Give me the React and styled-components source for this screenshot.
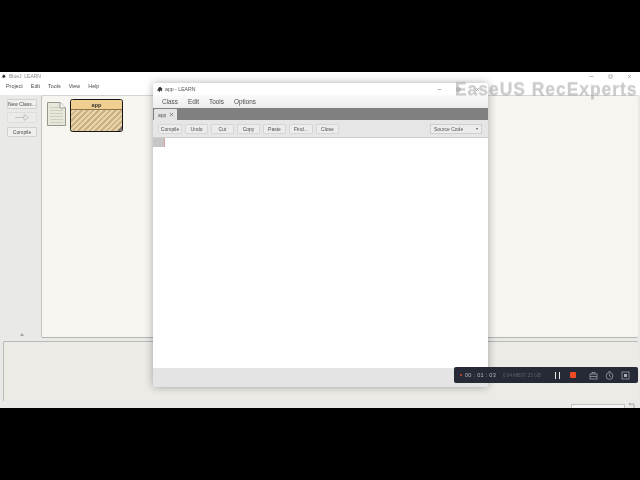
import styled, { createGlobalStyle } from "styled-components";

const GlobalStyle = createGlobalStyle`
html, body {
  margin: 0;
  padding: 0;
  background: #000;
  font-family: "Liberation Sans", Arial, sans-serif;
}
`

const Frame = styled.div`
position: relative;
width: 640px;
height: 480px;
background: #000;
overflow: hidden;
padding-top: 72px;
box-sizing: border-box;
`

const Screen = styled.div`
position: relative;
width: 640px;
height: 336px;
background: #e9e9e8;
display: flex;
flex-direction: column;
filter: blur(0.3px);
`

const TitleBar = styled.div`
height: 8px;
background: #fff;
display: flex;
align-items: center;
padding-left: 1px;
gap: 3px;
font-size: 5px;
color: #8f8f8f;
flex-shrink: 0;
`

const WinButtons = styled.div`
margin-left: auto;
display: flex;
padding-right: 1px;
align-items: center;
`

const WinButton = styled.div`
width: 19px;
display: flex;
justify-content: center;
align-items: center;
`

const MainMenu = styled.div`
height: 15px;
background: #fff;
display: flex;
align-items: center;
padding: 0 0 3px 6px;
box-sizing: border-box;
gap: 8px;
font-size: 5.4px;
color: #4d4d4d;
flex-shrink: 0;
`

const Middle = styled.div`
display: flex;
height: 243px;
flex-shrink: 0;
`

const Side = styled.div`
position: relative;
width: 41px;
flex-shrink: 0;
display: flex;
flex-direction: column;
align-items: center;
padding: 4px 0 0 3px;
box-sizing: border-box;
gap: 3px;
`

const SideButton = styled.div`
width: 30px;
height: ${(p) => (p.$off ? 11 : 10)}px;
background: ${(p) => (p.$off ? "#ebebea" : "#efefee")};
border: 0.5px solid ${(p) => (p.$off ? "#dedede" : "#d2d2d2")};
border-radius: 1px;
box-sizing: border-box;
display: flex;
align-items: center;
justify-content: center;
font-size: 5px;
white-space: nowrap;
color: #4d4d4d;
&:nth-child(3) {
  margin-top: 1px;
}
`

const ArrowUp = styled.div`
position: absolute;
left: 20px;
bottom: 2px;
width: 0;
height: 0;
border-left: 2.5px solid transparent;
border-right: 2.5px solid transparent;
border-bottom: 3px solid #a5a5a5;
`

const ClassPanel = styled.div`
flex: 1;
margin-right: 2px;
background: #f6f5f0;
border-left: 1px solid #c4c4c0;
border-top: 1px solid #d4d4d0;
border-bottom: 1px solid #b5b5b0;
border-radius: 2px;
display: flex;
align-items: flex-start;
padding: 3px 0 0 5px;
gap: 4px;
box-sizing: border-box;
`

const ClassCard = styled.div`
position: relative;
width: 53px;
height: 33px;
background: repeating-linear-gradient(135deg, #e6d4ac 0 2px, #cdb07e 2px 4px);
border: 1.2px solid #161616;
border-radius: 2.5px;
box-sizing: border-box;
overflow: hidden;
`

const ClassHead = styled.div`
height: 9px;
background: #f0cf90;
border-bottom: 0.5px solid #8a7550;
display: flex;
align-items: center;
justify-content: center;
font-size: 5.5px;
font-weight: bold;
color: #333;
`

const CardCorner = styled.div`
position: absolute;
right: 0;
bottom: 0;
width: 0;
height: 0;
border-left: 5px solid transparent;
border-bottom: 5px solid #85776a;
`

const BottomPanel = styled.div`
height: 59px;
margin: 3px 2px 0 3px;
background: #ecebe6;
border-left: 1px solid #b9b9b5;
border-top: 1px solid #b9b9b5;
border-radius: 2px 2px 0 0;
flex-shrink: 0;
`

const StatusBar = styled.div`
flex: 1;
display: flex;
justify-content: flex-end;
align-items: flex-end;
padding-right: 4px;
gap: 3px;
`

const StatusBox = styled.div`
width: 54px;
height: 4px;
background: #f4f4f4;
border: 0.5px solid #c4c4c4;
border-bottom: none;
box-sizing: border-box;
`

const EditorWindow = styled.div`
position: absolute;
left: 153px;
top: 11px;
width: 335px;
height: 304px;
display: flex;
flex-direction: column;
background: #e4e4e4;
border-radius: 2px;
box-shadow: 0 0 9px rgba(0, 0, 0, 0.32);
overflow: hidden;
`

const EditorTitle = styled.div`
height: 12px;
background: #fff;
display: flex;
align-items: center;
padding-left: 3px;
gap: 2px;
font-size: 5.2px;
color: #555;
flex-shrink: 0;
`

const EditorMenu = styled.div`
height: 13px;
background: linear-gradient(#fafafa, #ececec);
display: flex;
align-items: center;
padding-left: 9px;
gap: 10px;
font-size: 6.4px;
color: #4d4d4d;
flex-shrink: 0;
`

const TabRow = styled.div`
height: 12px;
background: #808080;
padding-left: 1px;
display: flex;
align-items: flex-end;
flex-shrink: 0;
`

const Tab = styled.div`
width: 23px;
height: 11px;
background: #e4e4e4;
border-radius: 1px 1px 0 0;
display: flex;
align-items: center;
padding-left: 4px;
box-sizing: border-box;
gap: 3px;
font-size: 5px;
color: #555;
`

const ToolRow = styled.div`
height: 18px;
background: #e6e6e6;
border-bottom: 1px solid #cfcfcf;
display: flex;
align-items: center;
padding: 1px 6px 0 5px;
gap: 3px;
box-sizing: border-box;
flex-shrink: 0;
`

const ToolButton = styled.div`
width: ${(p) => p.$w}px;
height: 10px;
background: #ececec;
border: 0.5px solid #d6d6d6;
border-radius: 1px;
box-sizing: border-box;
display: flex;
align-items: center;
justify-content: center;
font-size: 5px;
color: #4d4d4d;
`

const ViewSelect = styled.div`
margin-left: auto;
width: 52px;
height: 10px;
background: #ececec;
border: 0.5px solid #cfcfcf;
box-sizing: border-box;
display: flex;
align-items: center;
justify-content: space-between;
padding: 0 3px;
font-size: 5px;
color: #555;
`

const Caret = styled.div`
width: 0;
height: 0;
border-left: 1.5px solid transparent;
border-right: 1.5px solid transparent;
border-top: 2px solid #555;
`

const EditorBody = styled.div`
height: 230px;
background: #fff;
flex-shrink: 0;
`

const LineGutter = styled.div`
width: 11px;
height: 9px;
background: #c6c6c6;
border-right: 0.5px solid #d9a0a0;
`

const Watermark = styled.div`
position: absolute;
left: 455px;
top: 79px;
font-size: 17.5px;
line-height: 20px;
font-weight: bold;
letter-spacing: 0.95px;
color: rgba(130, 130, 130, 0.27);
-webkit-text-stroke: 0.3px rgba(130, 130, 130, 0.2);
text-shadow: 0 0.8px 0 rgba(90, 90, 90, 0.14);
white-space: nowrap;
filter: blur(0.5px);
`

const Recorder = styled.div`
position: absolute;
left: 454px;
top: 367px;
width: 184px;
height: 16px;
background: #262a36;
border-radius: 2px;
display: flex;
align-items: center;
padding-left: 6px;
box-sizing: border-box;
color: #9ba0aa;
filter: blur(0.25px);
`

const RecDot = styled.div`
width: 2px;
height: 2px;
border-radius: 50%;
background: #d8432e;
margin-right: 3px;
`

const RecTime = styled.span`
letter-spacing: 0.25px;
color: #b4b8c0;
font-size: 5.6px;
width: 38px;
white-space: nowrap;
`

const RecSize = styled.span`
color: #5c616d;
font-size: 4.6px;
width: 52px;
white-space: nowrap;
`

const Pause = styled.div`
width: 5px;
height: 7px;
border-left: 1.6px solid #e8e8e8;
border-right: 1.6px solid #e8e8e8;
box-sizing: border-box;
margin-right: 10px;
`

const StopBtn = styled.div`
width: 6px;
height: 6px;
background: #ee4b24;
border-radius: 1px;
margin-right: 13px;
`

const RecIcons = styled.div`
display: flex;
gap: 7px;
align-items: center;
`

function JavaIcon({ size = 5 }) {
    return (
        <svg width={size} height={size} viewBox="0 0 10 10">
            <path d="M1 8 L4 2 L6 1 L9 4 L8 8 L6 6 L5 9 L3 6 Z" fill="#333" />
        </svg>
    );
}

function WindowControls() {
    return (
        <WinButtons>
            <WinButton>
                <svg width="5" height="5" viewBox="0 0 5 5"><path d="M0.5 2.5 H4.5" stroke="#777" strokeWidth="0.5" /></svg>
            </WinButton>
            <WinButton>
                <svg width="5" height="5" viewBox="0 0 5 5"><rect x="1" y="1" width="3" height="3" fill="none" stroke="#777" strokeWidth="0.5" /></svg>
            </WinButton>
            <WinButton>
                <svg width="5" height="5" viewBox="0 0 5 5"><path d="M1 1 L4 4 M4 1 L1 4" stroke="#777" strokeWidth="0.5" /></svg>
            </WinButton>
        </WinButtons>
    );
}

function PageIcon() {
    return (
        <svg width="19" height="24" viewBox="0 0 19 24" style={{ marginTop: 3 }}>
            <path d="M0.5 0.5 H13 L18.5 6 V23.5 H0.5 Z" fill="#e9e7d9" stroke="#98988f" />
            <path d="M13 0.5 V6 H18.5" fill="#fbfbf6" stroke="#98988f" />
            {[5, 8, 11, 14, 17, 20].map((y) => (
                <path key={y} d={`M3 ${y}.5 H16`} stroke="#c4c2b4" strokeWidth="0.7" />
            ))}
        </svg>
    );
}

const tools = [
    { name: "Compile", w: 24 },
    { name: "Undo", w: 23 },
    { name: "Cut", w: 23 },
    { name: "Copy", w: 23 },
    { name: "Paste", w: 23 },
    { name: "Find...", w: 24 },
    { name: "Close", w: 23 },
];

function App() {
    return (
        <Frame>
            <GlobalStyle />
            <Screen>
                <TitleBar>
                    <JavaIcon />
                    <span>BlueJ: LEARN</span>
                    <WindowControls />
                </TitleBar>
                <MainMenu>
                    <span>Project</span>
                    <span>Edit</span>
                    <span>Tools</span>
                    <span>View</span>
                    <span>Help</span>
                </MainMenu>
                <Middle>
                    <Side>
                        <SideButton>New Class...</SideButton>
                        <SideButton $off>
                            <svg width="14" height="7" viewBox="0 0 14 7">
                                <path d="M0 3.5 H9" stroke="#a8a8a8" strokeWidth="0.6" />
                                <path d="M9 0.5 L13.5 3.5 L9 6.5 Z" fill="#efefee" stroke="#a8a8a8" strokeWidth="0.6" />
                            </svg>
                        </SideButton>
                        <SideButton>Compile</SideButton>
                        <ArrowUp />
                    </Side>
                    <ClassPanel>
                        <PageIcon />
                        <ClassCard>
                            <ClassHead>app</ClassHead>
                            <CardCorner />
                        </ClassCard>
                    </ClassPanel>
                </Middle>
                <BottomPanel />
                <StatusBar>
                    <StatusBox />
                    <svg width="8" height="5" viewBox="0 0 8 5" fill="none" stroke="#888" strokeWidth="0.6">
                        <path d="M1 1 H6 V5 M1 1 L2.5 0 M1 1 L2.5 2" />
                    </svg>
                </StatusBar>

                <EditorWindow>
                    <EditorTitle>
                        <JavaIcon size={7} />
                        <span>app - LEARN</span>
                        <WindowControls />
                    </EditorTitle>
                    <EditorMenu>
                        <span>Class</span>
                        <span>Edit</span>
                        <span>Tools</span>
                        <span>Options</span>
                    </EditorMenu>
                    <TabRow>
                        <Tab>
                            <span>app</span>
                            <svg width="5" height="5" viewBox="0 0 5 5"><path d="M0.8 0.8 L4.2 4.2 M4.2 0.8 L0.8 4.2" stroke="#555" strokeWidth="0.6" /></svg>
                        </Tab>
                    </TabRow>
                    <ToolRow>
                        {tools.map((t) => (
                            <ToolButton key={t.name} $w={t.w}>{t.name}</ToolButton>
                        ))}
                        <ViewSelect>
                            <span>Source Code</span>
                            <Caret />
                        </ViewSelect>
                    </ToolRow>
                    <EditorBody>
                        <LineGutter />
                    </EditorBody>
                </EditorWindow>
            </Screen>

            <Watermark>EaseUS RecExperts</Watermark>

            <Recorder>
                <RecDot />
                <RecTime>00 : 01 : 03</RecTime>
                <RecSize>0.04 MB/97.23 GB</RecSize>
                <Pause />
                <StopBtn />
                <RecIcons>
                    <svg width="9" height="9" viewBox="0 0 9 9" fill="none" stroke="#a8acb4" strokeWidth="0.7">
                        <rect x="1" y="3" width="7" height="5" />
                        <path d="M3 3 V1.5 H6 V3 M1 5.5 H8" />
                    </svg>
                    <svg width="9" height="9" viewBox="0 0 9 9" fill="none" stroke="#a8acb4" strokeWidth="0.7">
                        <circle cx="4.5" cy="5" r="3.4" />
                        <path d="M4.5 3 V5 L6 6 M3.3 0.7 H5.7" />
                    </svg>
                    <svg width="9" height="9" viewBox="0 0 9 9" fill="none" stroke="#a8acb4" strokeWidth="0.7">
                        <rect x="1" y="1" width="7" height="7" />
                        <path d="M3 3 H6 V6 H3 Z" fill="#a8acb4" stroke="none" />
                    </svg>
                </RecIcons>
            </Recorder>
        </Frame>
    );
}

export default App;
